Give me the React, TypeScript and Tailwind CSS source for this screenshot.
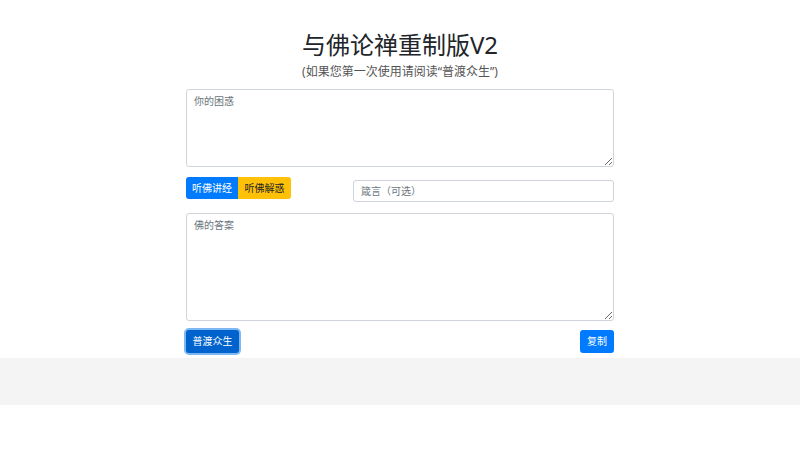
import React from "react";

export default function App() {
  const font = { fontFamily: '"Noto Sans", "Noto Sans CJK SC", sans-serif' };
  return (
    <div className="w-[800px] h-[450px] bg-white text-[#212529]" style={font}>
      <div className="w-[428px] mx-auto flex flex-col">
        <h1 className="pt-[30px] text-center text-[24px] leading-[30px] font-normal text-[#212529]">
          与佛论禅重制版V2
        </h1>
        <p className="mt-[4px] text-center text-[12px] leading-[16px] text-[#555]">
          (如果您第一次使用请阅读“普渡众生”)
        </p>
        <textarea
          className="mt-[9px] h-[78px] w-full border border-[#ced4da] rounded-[3px] px-[7px] py-[4px] text-[10px] leading-[15px] placeholder:text-[#6c757d] outline-none"
          placeholder="你的困惑"
        />
        <div className="mt-[10px] flex items-start justify-between">
          <div className="flex">
            <button className="h-[22px] w-[52px] bg-[#007bff] text-white text-[10px] rounded-l-[3px]">
              听佛讲经
            </button>
            <button className="h-[22px] w-[53px] bg-[#ffc107] text-[#212529] text-[10px] rounded-r-[3px]">
              听佛解惑
            </button>
          </div>
          <input
            className="mt-[3px] h-[22px] w-[261px] border border-[#ced4da] rounded-[3px] px-[7px] text-[10px] placeholder:text-[#6c757d] outline-none"
            placeholder="箴言（可选）"
          />
        </div>
        <textarea
          className="mt-[11px] h-[108px] w-full border border-[#ced4da] rounded-[3px] px-[7px] py-[4px] text-[10px] leading-[15px] placeholder:text-[#6c757d] outline-none"
          placeholder="佛的答案"
        />
        <div className="mt-[9px] flex justify-between">
          <button className="h-[23px] w-[53px] bg-[#0062cc] text-white text-[10px] rounded-[3px] ring-[2px] ring-[#7db8f5]">
            普渡众生
          </button>
          <button className="h-[23px] w-[34px] bg-[#007bff] text-white text-[10px] rounded-[3px]">
            复制
          </button>
        </div>
      </div>
      <div className="mt-[5px] h-[47px] w-full bg-[#f4f4f4]" />
    </div>
  );
}
